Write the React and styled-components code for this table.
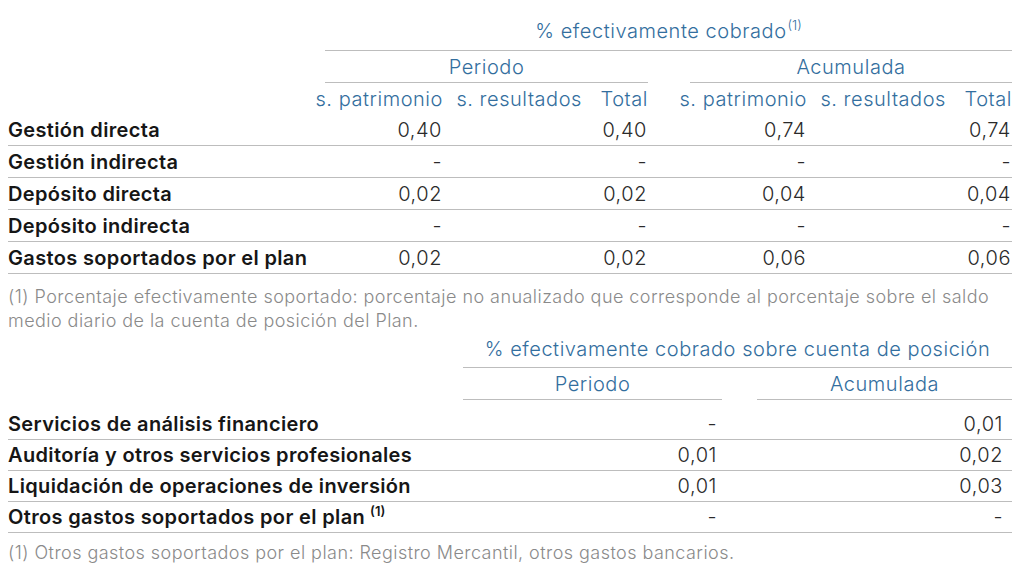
import React from 'react'
import styled, { createGlobalStyle } from 'styled-components'

const GlobalStyle = createGlobalStyle`
  html, body { margin: 0; padding: 0; background: #fff; }
  body {
    font-family: Inter, "Noto Sans", "Liberation Sans", sans-serif;
    color: #1c1c1c;
    -webkit-font-smoothing: antialiased;
  }
`

const Page = styled.div`
  width: 1024px;
  height: 580px;
  padding: 0 12px 0 8px;
  box-sizing: border-box;
  overflow: hidden;
`

const Grid = styled.div`
  display: grid;
  grid-template-columns: ${p => p.$cols};
`

const Head = styled.div`
  grid-column: ${p => p.$span || 'auto'};
  height: ${p => p.$h || 32}px;
  display: flex;
  align-items: ${p => p.$align || 'center'};
  justify-content: ${p => p.$justify || 'center'};
  color: #336e9e;
  font-size: 20px;
  font-weight: 300;
  letter-spacing: 0.55px;
  white-space: nowrap;
  box-sizing: border-box;
  border-bottom: ${p => (p.$line ? '1px solid #bdbdbd' : '0')};
  padding-bottom: ${p => p.$pb || 0}px;
  sup { font-size: 13px; line-height: 0; vertical-align: 8px; margin-left: 1px; letter-spacing: 0; }
`

const Label = styled.div`
  grid-column: 1;
  height: ${p => p.$h || 32}px;
  display: flex;
  align-items: center;
  font-size: 20px;
  font-weight: 600;
  color: #161616;
  letter-spacing: 0.35px;
  white-space: nowrap;
  border-bottom: 1px solid #bdbdbd;
  box-sizing: border-box;
  sup { font-size: 13px; line-height: 0; vertical-align: 8px; margin-left: 5px; letter-spacing: 0; }
`

const Value = styled.div`
  grid-column: ${p => p.$col};
  height: ${p => p.$h || 32}px;
  display: flex;
  align-items: center;
  justify-content: flex-end;
  padding-right: ${p => p.$pr || 1}px;
  font-size: 20px;
  font-weight: 300;
  letter-spacing: 0.55px;
  color: #2a2a2a;
  border-bottom: 1px solid #bdbdbd;
  box-sizing: border-box;
`

const Spacer = styled.div`
  grid-column: ${p => p.$col};
  height: ${p => p.$h || 32}px;
`

const Note = styled.p`
  margin: ${p => p.$m || '0'};
  font-size: 18px;
  font-weight: 300;
  line-height: 24px;
  color: #8a8a8a;
  letter-spacing: 0.45px;
  white-space: nowrap;
`

const rows1 = [
  ['Gestión directa', '0,40', '', '0,40', '0,74', '', '0,74'],
  ['Gestión indirecta', '-', '', '-', '-', '', '-'],
  ['Depósito directa', '0,02', '', '0,02', '0,04', '', '0,04'],
  ['Depósito indirecta', '-', '', '-', '-', '', '-'],
  ['Gastos soportados por el plan', '0,02', '', '0,02', '0,06', '', '0,06'],
]

const rows2 = [
  ['Servicios de análisis financiero', '-', '0,01'],
  ['Auditoría y otros servicios profesionales', '0,01', '0,02'],
  ['Liquidación de operaciones de inversión', '0,01', '0,03'],
  ['Otros gastos soportados por el plan', '-', '-', true],
]

// label | 3 periodo cols | gap | 3 acumulada cols
const cols1 = '317px 118px 139px 66px 42px 117px 139px 66px'
const valueCols1 = [2, 3, 4, 6, 7, 8]

// label | periodo | gap | acumulada
const cols2 = '455px 259px 35px 255px'

const App = () => {
  return (
    <Page>
      <GlobalStyle />
      <Grid $cols={cols1}>
        <Spacer $col={1} $h={51} />
        <Head $span="2 / 9" $h={51} $align="flex-end" $pb={7} $line>
          <span>% efectivamente cobrado<sup>(1)</sup></span>
        </Head>

        <Spacer $col={1} />
        <Head $span="2 / 5" $line>Periodo</Head>
        <Spacer $col={5} />
        <Head $span="6 / 9" $line>Acumulada</Head>

        <Spacer $col={1} $h={31} />
        {['s. patrimonio', 's. resultados', 'Total'].map((t, i) => (
          <Head key={'p' + i} $span={String(i + 2)} $justify="flex-end" $h={31}>{t}</Head>
        ))}
        <Spacer $col={5} $h={31} />
        {['s. patrimonio', 's. resultados', 'Total'].map((t, i) => (
          <Head key={'a' + i} $span={String(i + 6)} $justify="flex-end" $h={31}>{t}</Head>
        ))}

        {rows1.map(r => (
          <React.Fragment key={r[0]}>
            <Label>{r[0]}</Label>
            {r.slice(1, 4).map((v, i) => (
              <Value key={i} $col={valueCols1[i]}>{v}</Value>
            ))}
            <Value $col={5} />
            {r.slice(4).map((v, i) => (
              <Value key={i + 3} $col={valueCols1[i + 3]}>{v}</Value>
            ))}
          </React.Fragment>
        ))}
      </Grid>

      <Note $m="11px 0 0">
        (1) Porcentaje efectivamente soportado: porcentaje no anualizado que corresponde al porcentaje sobre el saldo
        <br />
        medio diario de la cuenta de posición del Plan.
      </Note>

      <Grid $cols={cols2}>
        <Spacer $col={1} $h={35} />
        <Head $span="2 / 5" $h={35} $align="flex-end" $pb={6} $line>
          % efectivamente cobrado sobre cuenta de posición
        </Head>

        <Spacer $col={1} />
        <Head $span="2" $line>Periodo</Head>
        <Spacer $col={3} />
        <Head $span="4" $line>Acumulada</Head>

        <Spacer $col={1} $h={9} />
        <Spacer $col={2} $h={9} />
        <Spacer $col={3} $h={9} />
        <Spacer $col={4} $h={9} />

        {rows2.map(r => (
          <React.Fragment key={r[0]}>
            <Label $h={31}>
              <span>
                {r[0]}
                {r[3] && <sup>(1)</sup>}
              </span>
            </Label>
            <Value $col={2} $h={31} $pr={5}>{r[1]}</Value>
            <Value $col={3} $h={31} />
            <Value $col={4} $h={31} $pr={9}>{r[2]}</Value>
          </React.Fragment>
        ))}
      </Grid>

      <Note $m="8px 0 0">
        (1) Otros gastos soportados por el plan: Registro Mercantil, otros gastos bancarios.
      </Note>
    </Page>
  )
}

export default App
